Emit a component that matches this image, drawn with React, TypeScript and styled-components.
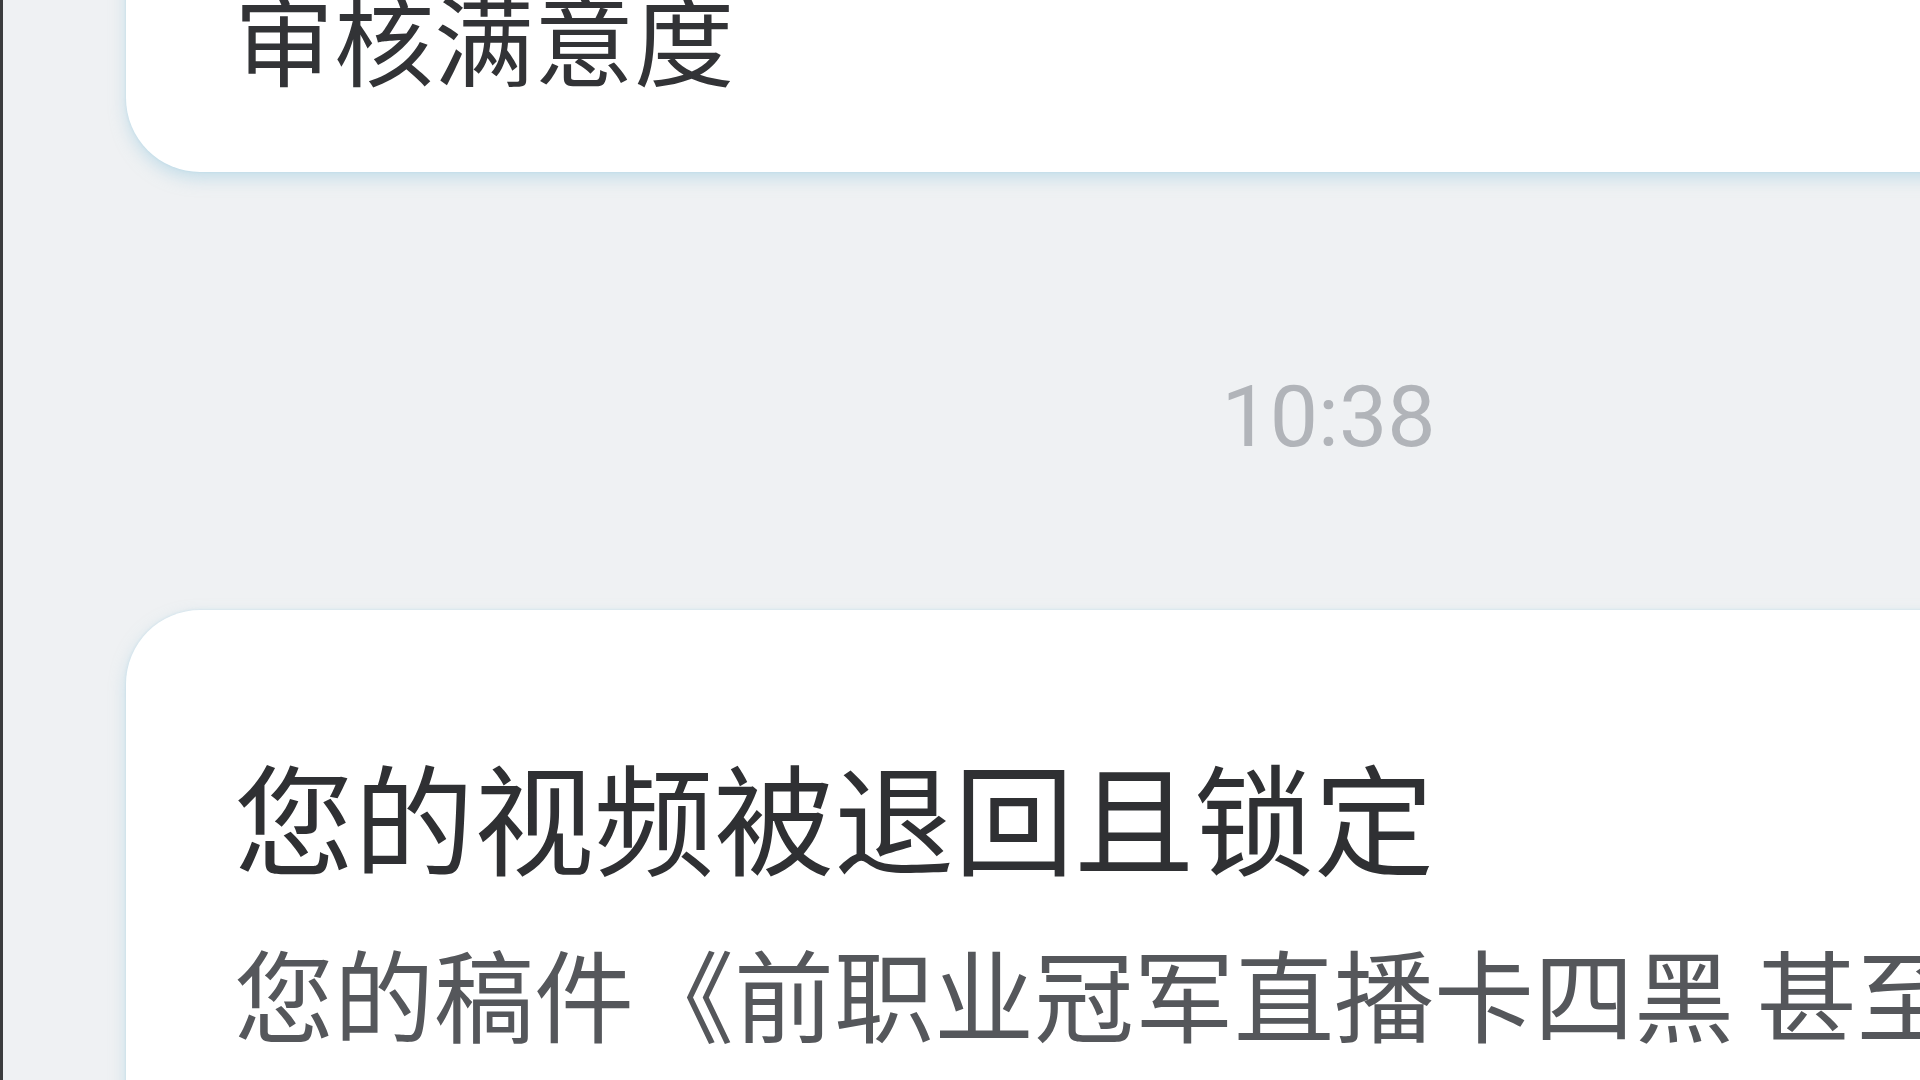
import React from 'react';
import styled, { createGlobalStyle } from 'styled-components';

const GlobalStyle = createGlobalStyle`
  html, body {
    margin: 0;
    padding: 0;
    background: #eff1f3;
    overflow: hidden;
  }
  body {
    font-family: 'Noto Sans CJK SC', 'Noto Sans', sans-serif;
  }
`;

const App: React.FC = () => {
  return (
    <>
      <GlobalStyle />
      <Screen>
        <NoticeCard $top>
          <CardBody>审核满意度</CardBody>
        </NoticeCard>
        <TimeRow>10:38</TimeRow>
        <NoticeCard>
          <CardTitle>您的视频被退回且锁定</CardTitle>
          <CardBody $muted>您的稿件《前职业冠军直播卡四黑 甚至被对手嘲讽》</CardBody>
        </NoticeCard>
      </Screen>
    </>
  );
};

export default App;

const Screen = styled.div`
  display: flex;
  flex-direction: column;
  width: 2654px;
  height: 1080px;
  box-sizing: border-box;
  border-left: 3px solid #3b3c3e;
  background: #eff1f3;
`;

const NoticeCard = styled.div<{ $top?: boolean }>`
  margin: ${({ $top }) => ($top ? '-93px 0 0 123px' : '0 0 0 123px')};
  padding: ${({ $top }) => ($top ? '60px 108px 68px' : '128px 108px 200px')};
  background: #ffffff;
  border-radius: 74px;
  box-shadow: 0 7px 16px rgba(160, 205, 225, 0.5), 0 0 3px rgba(180, 215, 230, 0.6);
`;

const CardTitle = styled.div`
  font-size: 120px;
  line-height: 155px;
  color: #2f3033;
  white-space: nowrap;
`;

const CardBody = styled.div<{ $muted?: boolean }>`
  margin-top: ${({ $muted }) => ($muted ? '30px' : '0')};
  font-size: 100px;
  line-height: 137px;
  color: ${({ $muted }) => ($muted ? '#55575b' : '#323336')};
  white-space: nowrap;
`;

const TimeRow = styled.div`
  margin: 192px 0 140px;
  text-align: center;
  font-family: Roboto, 'Noto Sans', sans-serif;
  font-size: 86px;
  line-height: 106px;
  color: #b1b4b9;
`;
